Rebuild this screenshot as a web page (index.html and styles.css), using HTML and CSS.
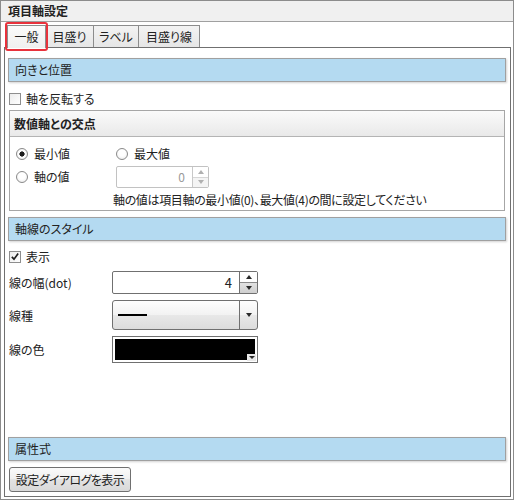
FILE: index.html
```html
<!DOCTYPE html>
<html lang="ja">
<head>
<meta charset="utf-8">
<title>項目軸設定</title>
<link rel="stylesheet" href="styles.css">
</head>
<body>
<div class="window">
  <div class="titlebar">項目軸設定</div>
  <div class="tabs">
    <div class="tab tab-1 active">一般<span class="highlight"></span></div>
    <div class="tab tab-2">目盛り</div>
    <div class="tab tab-3">ラベル</div>
    <div class="tab tab-4">目盛り線</div>
  </div>
  <div class="panel">
    <div class="section-head">向きと位置</div>
    <div class="check-row"><span class="checkbox"></span><span>軸を反転する</span></div>
    <div class="group">
      <div class="group-head">数値軸との交点</div>
      <div class="group-body">
        <div class="radio-row first">
          <div class="radio-item col1"><span class="radio on"></span><span>最小値</span></div>
          <div class="radio-item"><span class="radio"></span><span>最大値</span></div>
        </div>
        <div class="radio-row second">
          <div class="radio-item col1"><span class="radio"></span><span>軸の値</span></div>
          <div class="spin spin-disabled">
            <div class="spin-value">0</div>
            <div class="spin-buttons">
              <span class="spin-btn"><span class="tri-up"></span></span>
              <span class="spin-btn"><span class="tri-down"></span></span>
            </div>
          </div>
        </div>
        <div class="note">軸の値は項目軸の最小値(0)、最大値(4)の間に設定してください</div>
      </div>
    </div>
    <div class="section-head second-head">軸線のスタイル</div>
    <div class="check-row show-row"><span class="checkbox checked"><svg width="12" height="12" viewBox="0 0 12 12"><path d="M2.2 5.8 L4.8 8.6 L9.8 1.8" fill="none" stroke="#1e1e1e" stroke-width="2"/></svg></span><span>表示</span></div>
    <div class="form-row row-width">
      <div class="form-label">線の幅(dot)</div>
      <div class="spin spin-enabled">
        <div class="spin-value">4</div>
        <div class="spin-buttons">
          <span class="spin-btn"><span class="tri-up"></span></span>
          <span class="spin-btn pressed"><span class="tri-down"></span></span>
        </div>
      </div>
    </div>
    <div class="form-row row-type">
      <div class="form-label">線種</div>
      <div class="combo">
        <div class="combo-value"><span class="line-sample"></span></div>
        <div class="combo-btn"><span class="tri-down dark"></span></div>
      </div>
    </div>
    <div class="form-row row-color">
      <div class="form-label">線の色</div>
      <div class="color-box"><div class="color-fill"></div><span class="color-arrow"><span class="tri-down mini"></span></span></div>
    </div>
    <div class="section-head attr-head">属性式</div>
    <div class="button-row"><button class="btn">設定ダイアログを表示</button></div>
  </div>
</div>
</body>
</html>
```
FILE: styles.css
```css
* { box-sizing: border-box; }
html, body { margin: 0; padding: 0; background: #fff; }
body {
  font-family: "Noto Sans CJK JP", "Noto Sans", sans-serif;
  font-size: 12px;
  color: #222;
  font-feature-settings: "palt";
}
.window {
  width: 514px;
  height: 500px;
  border: 1px solid #8c8c8c;
  background: #fff;
  display: flex;
  flex-direction: column;
}
.titlebar {
  height: 21px;
  flex: none;
  background: #f0f0f0;
  border-bottom: 1px solid #a0a0a0;
  font-weight: bold;
  line-height: 20px;
  padding-left: 7px;
}
.tabs {
  height: 25px;
  flex: none;
  display: flex;
  align-items: flex-end;
  padding-left: 6px;
  position: relative;
  z-index: 2;
}
.tab {
  height: 22px;
  border: 1px solid #8c8c8c;
  border-bottom: none;
  background: linear-gradient(#f3f3f3, #e6e6e6);
  text-align: center;
  line-height: 21px;
  margin-left: -1px;
  position: relative;
}
.tab-1 { width: 39px; margin-left: 0; }
.tab-2 { width: 49px; }
.tab-3 { width: 46px; }
.tab-4 { width: 62px; }
.tab.active {
  background: linear-gradient(#fbfbfb, #f0f0f0);
  height: 23px;
  margin-bottom: -1px;
  z-index: 1;
}
.highlight {
  position: absolute;
  left: -3px;
  right: -3px;
  top: -4px;
  bottom: -3px;
  border: 2px solid #e8323c;
  border-radius: 3px;
}
.panel {
  height: 450px;
  flex: none;
  margin: 0 2px 0 3px;
  border: 1px solid #707070;
  display: flex;
  flex-direction: column;
  padding-bottom: 4px;
}
.section-head {
  height: 24px;
  flex: none;
  margin: 10px 4px 0 3px;
  background: #b4daf1;
  border: 1px solid #a0a0a0;
  box-shadow: 1px 1px 2px rgba(0,0,0,0.18);
  line-height: 22px;
  padding-left: 6px;
}
.second-head { margin-top: 6px; }
.attr-head { margin-top: auto; }
.check-row {
  display: flex;
  align-items: center;
  height: 12px;
  margin: 11px 0 0 4px;
  line-height: 12px;
}
.show-row { margin-top: 10px; }
.checkbox {
  width: 12px;
  height: 12px;
  flex: none;
  border: 1px solid #8e8e8e;
  background: linear-gradient(135deg, #ececec, #ffffff);
  margin-right: 5px;
  display: flex;
  align-items: center;
  justify-content: center;
}
.checkbox.checked svg { display: block; margin: -1px 0 0 0; }
.group {
  margin: 5px 5px 0 4px;
  border: 1px solid #a6a6a6;
  flex: none;
}
.group-head {
  height: 26px;
  border-bottom: 1px solid #b4b4b4;
  background: linear-gradient(#fafafa, #e9e9e9);
  font-weight: bold;
  line-height: 25px;
  padding-left: 4px;
}
.group-body {
  padding: 11px 0 3px 6px;
}
.radio-row {
  display: flex;
  align-items: center;
}
.radio-row.first { height: 12px; }
.radio-row.second { height: 22px; margin-top: 6px; }
.radio-item {
  display: flex;
  align-items: center;
  line-height: 12px;
}
.radio-item.col1 { width: 100px; }
.radio {
  width: 12px;
  height: 12px;
  flex: none;
  border-radius: 50%;
  border: 1px solid #8a8a8a;
  background: radial-gradient(circle at 50% 40%, #ffffff 0 40%, #e6e6e6 100%);
  margin-right: 6px;
}
.radio.on {
  background: radial-gradient(circle, #1e1e1e 0 2.3px, #ffffff 2.9px 50%, #e4e4e4 100%);
}
.note {
  margin-top: 5px;
  padding-left: 97px;
  height: 14px;
  line-height: 14px;
  white-space: nowrap;
  letter-spacing: -0.35px;
}
.spin {
  display: flex;
  border: 1px solid #707070;
  border-radius: 2px;
  background: #fff;
}
.spin-disabled {
  width: 93px;
  height: 22px;
  border-color: #c2c2c2;
  color: #9a9a9a;
}
.spin-enabled {
  width: 146px;
  height: 23px;
}
.spin-value {
  flex: 1;
  text-align: right;
  padding-right: 7px;
  line-height: 20px;
}
.spin-enabled .spin-value { font-size: 13px; line-height: 21px; }
.spin-buttons {
  width: 17px;
  display: flex;
  flex-direction: column;
  border-left: 1px solid #707070;
}
.spin-enabled .spin-buttons { width: 18px; }
.spin-disabled .spin-buttons { width: 16px; border-left-color: #c8c8c8; }
.spin-btn {
  flex: 1;
  display: flex;
  align-items: center;
  justify-content: center;
  background: #fff;
}
.spin-btn + .spin-btn { border-top: 1px solid #a8a8a8; }
.spin-disabled .spin-btn + .spin-btn { border-top-color: #d6d6d6; background: #f4f4f4; }
.spin-btn.pressed { background: linear-gradient(#e2e2e2, #cfcfcf); border-top-color: #8a8a8a; }
.tri-up, .tri-down {
  width: 0;
  height: 0;
  border-left: 3.5px solid transparent;
  border-right: 3.5px solid transparent;
}
.tri-up { border-bottom: 4px solid #2a2a2a; }
.tri-down { border-top: 4px solid #2a2a2a; }
.spin-disabled .tri-up { border-bottom-color: #b0b0b0; }
.spin-disabled .tri-down { border-top-color: #b0b0b0; }
.form-row {
  display: flex;
  align-items: center;
  flex: none;
  margin-left: 4px;
}
.row-width { margin-top: 8px; }
.row-type { margin-top: 6px; }
.row-color { margin-top: 6px; }
.form-label {
  width: 103px;
  flex: none;
}
.combo {
  width: 146px;
  height: 30px;
  display: flex;
  border: 1px solid #707070;
  border-radius: 3px;
  background: linear-gradient(#fefefe, #f2f2f2 50%, #e8e8e8 50%, #dcdcdc);
}
.combo-value {
  flex: 1;
  display: flex;
  align-items: center;
  padding-left: 5px;
}
.line-sample {
  width: 29px;
  height: 2px;
  background: #000;
}
.combo-btn {
  width: 18px;
  border-left: 1px solid #707070;
  display: flex;
  align-items: center;
  justify-content: center;
}
.color-box {
  width: 146px;
  height: 27px;
  border: 1px solid #707070;
  padding: 2px;
  background: #fff;
  position: relative;
}
.color-fill {
  width: 100%;
  height: 100%;
  background: #000;
}
.color-arrow {
  position: absolute;
  right: 1px;
  bottom: 1px;
  width: 9px;
  height: 7px;
  background: #e8e8e8;
  display: flex;
  align-items: center;
  justify-content: center;
}
.tri-down.mini {
  border-left-width: 3px;
  border-right-width: 3px;
  border-top-width: 3px;
}
.button-row {
  margin: 6px 0 0 4px;
  flex: none;
}
.btn {
  width: 122px;
  height: 25px;
  border: 1px solid #707070;
  border-radius: 3px;
  background: linear-gradient(#fafafa, #efefef 50%, #e3e3e3 50%, #d9d9d9);
  font-family: inherit;
  font-size: 12px;
  font-feature-settings: "palt";
  letter-spacing: -0.6px;
  color: #222;
  padding: 0;
  line-height: 22px;
}
```
